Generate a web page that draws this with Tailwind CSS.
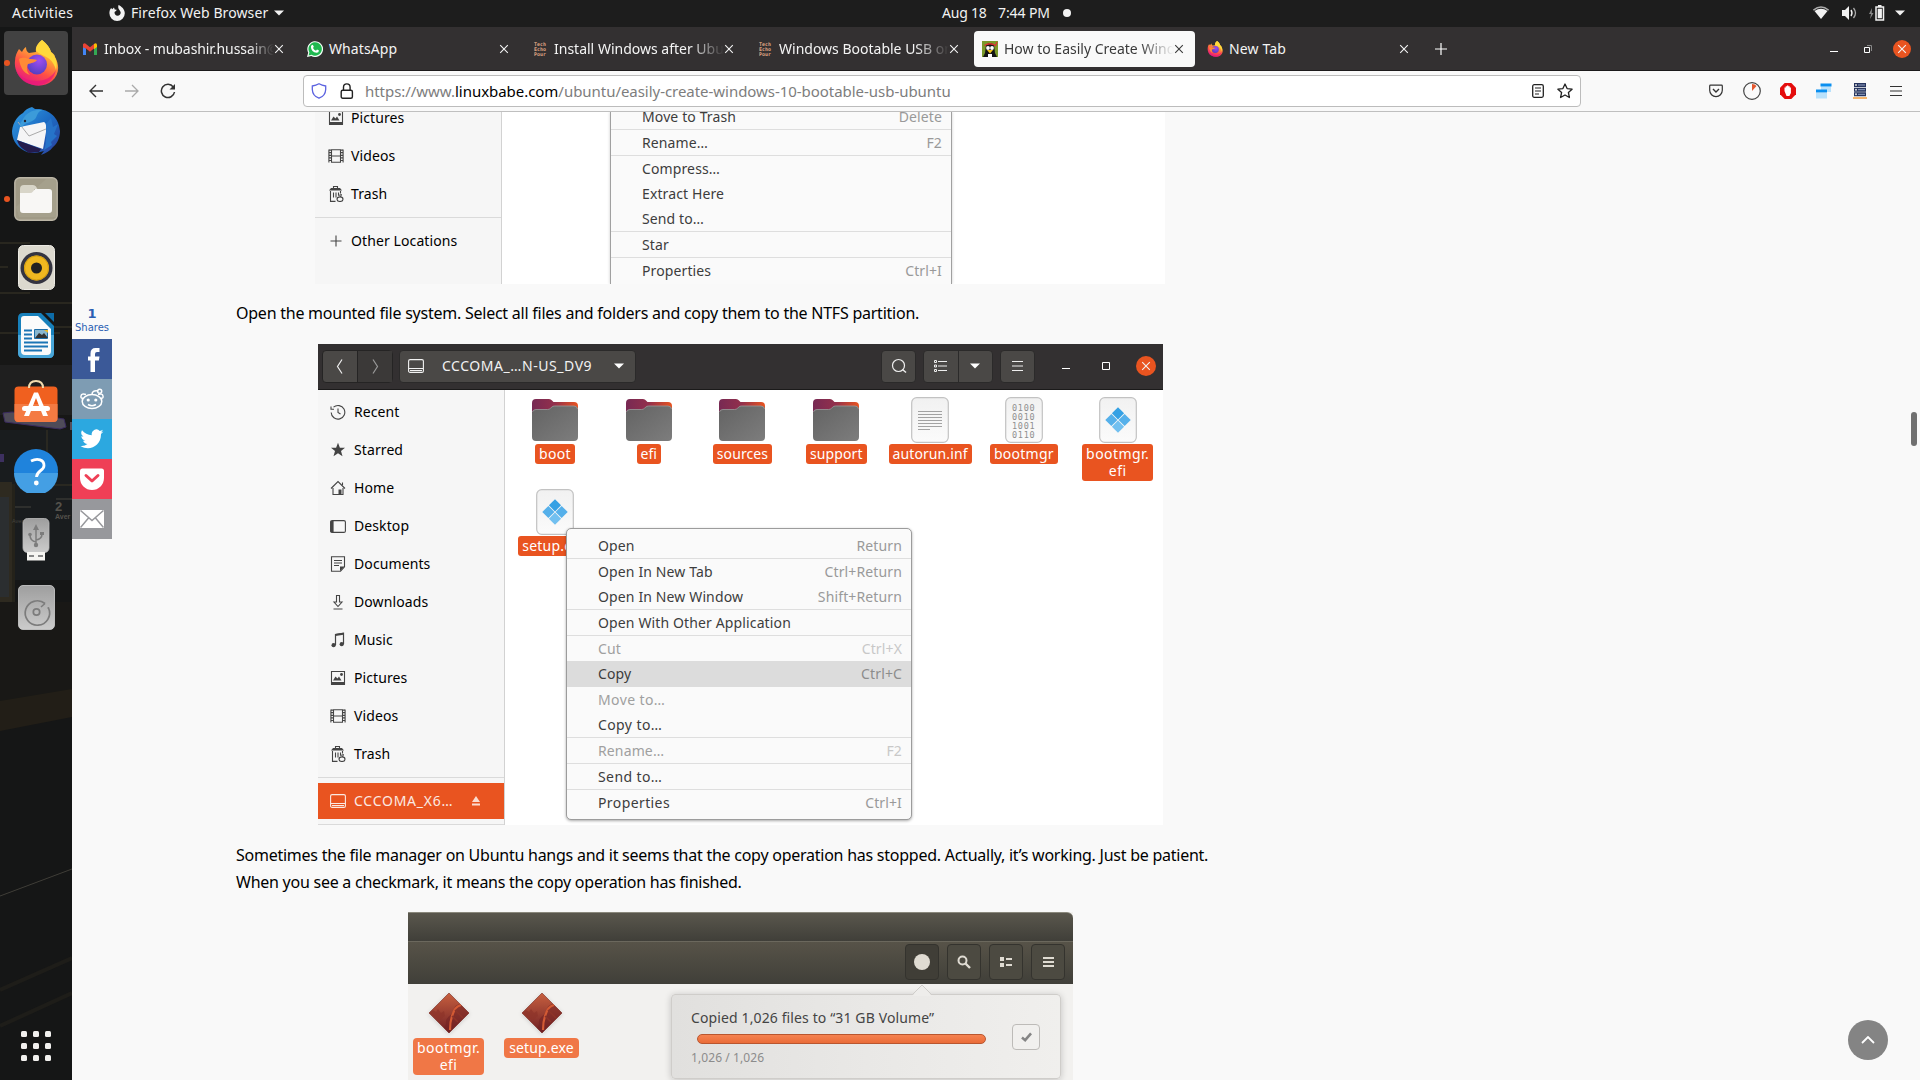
<!DOCTYPE html>
<html lang="en">
<head>
<meta charset="utf-8">
<title>How to Easily Create Windows 10 Bootable USB on Ubuntu</title>
<script src="https://cdn.jsdelivr.net/npm/@tailwindcss/browser@4"></script>
</head>
<body class="w-[1920px] h-[1080px] overflow-hidden bg-[#f9f9f9] font-['Noto_Sans','Open_Sans',sans-serif] text-[14px] leading-none text-[#3d3d3d]">

<svg class="absolute h-0 w-0">
  <defs>
    <linearGradient id="ff" x1=".8" y1="0" x2=".3" y2="1"><stop offset="0" stop-color="#fff44f"/><stop offset=".35" stop-color="#ffa436"/><stop offset=".65" stop-color="#ff4f45"/><stop offset="1" stop-color="#e31587"/></linearGradient>
    <radialGradient id="ffg" cx=".6" cy=".3" r=".8"><stop offset="0" stop-color="#a04df0"/><stop offset="1" stop-color="#4a3dbb"/></radialGradient>
    <linearGradient id="fold" x1="0" y1="0" x2="1" y2="0"><stop offset="0" stop-color="#772953"/><stop offset=".5" stop-color="#93304c"/><stop offset="1" stop-color="#e95420"/></linearGradient>
    <linearGradient id="foldf" x1="0" y1="0" x2="1" y2="1"><stop offset="0" stop-color="#636363"/><stop offset="1" stop-color="#7d7d7d"/></linearGradient>
    <linearGradient id="sheet" x1="0" y1="0" x2="0" y2="1"><stop offset="0" stop-color="#f1f1f1"/><stop offset="1" stop-color="#fbfbfb"/></linearGradient>
    <linearGradient id="dia" x1="0" y1="0" x2="0" y2="1"><stop offset="0" stop-color="#c8603f"/><stop offset="1" stop-color="#6e1f24"/></linearGradient>
    <linearGradient id="tb" x1="0" y1="0" x2="1" y2="1"><stop offset="0" stop-color="#35a0e4"/><stop offset=".5" stop-color="#1c6cc4"/><stop offset="1" stop-color="#2d3e9c"/></linearGradient>
    <linearGradient id="dev" x1="0" y1="0" x2="0" y2="1"><stop offset="0" stop-color="#9e9e9e"/><stop offset="1" stop-color="#cbcbcb"/></linearGradient>
  </defs>
  <symbol id="firefox" viewBox="0 0 46 46">
    <path d="M29 0c5 4 8 8 9 12 2 1 4 3 4 5 5 9 4 18-3 24-7 6-18 6-26 1C5 37 1 29 2 21c0-5 2-9 4-12l3 3c1-2 2-4 4-5 0 3 1 5 3 6l7-1c-1-5 2-9 6-12z" fill="url(#ff)"/>
    <path d="M29 0c5 4 8 8 9 12 5 5 7 11 5 18-2-7-5-10-8-12-4-3-12-5-12-8 0-4 3-7 6-10z" fill="#ffd93b"/>
    <circle cx="24" cy="24.500" r="10" fill="url(#ffg)"/>
    <path d="M6 19c4-2 7-1 10 0 3 0 6 0 8 1-2 3-6 3-9 4-2 4-1 8 2 11-7-2-10-9-11-16z" fill="#ff8a36"/>
    <path d="M3 30c5 8 12 11 21 11 8 0 15-4 19-11-2 9-9 15-19 15-11 0-18-6-21-15z" fill="#e9197a" opacity=".75"/>
  </symbol>
  <symbol id="recent" viewBox="0 0 16 16"><path d="M3.500 3.200A6.800 6.800 0 1 1 1.200 8.500M1 2.500v2.700h3M8 4.500v4l2.500 1.500" fill="none" stroke="currentColor" stroke-width="1.100"/></symbol>
  <symbol id="starred" viewBox="0 0 16 16"><path d="M8 .8l1.900 5H15l-4 3.300 1.500 5.200L8 11.200l-4.500 3.100L5 9.100 1 5.800h5.100z" fill="currentColor"/></symbol>
  <symbol id="home" viewBox="0 0 16 16"><path d="M1 8.500L8 1.500l7 7M3 8v6.500h10V8M12.500 5V2.500" fill="none" stroke="currentColor" stroke-width="1.100"/><path d="M8.500 9.500h3v5h-3z" fill="currentColor"/></symbol>
  <symbol id="desktop" viewBox="0 0 16 16"><rect x=".6" y="2.600" width="14.800" height="11.800" rx="1.500" fill="none" stroke="currentColor" stroke-width="1.100"/><path d="M.6 3h3v11.400h-3z" fill="currentColor"/></symbol>
  <symbol id="documents" viewBox="0 0 16 16"><path d="M1.500.8h13v10l-4 4.400h-9z" fill="none" stroke="currentColor" stroke-width="1.100"/><path d="M4 4.500h8M4 7h8M4 9.500h5" stroke="currentColor"/><path d="M10 15v-4.500h4.500z" fill="currentColor"/></symbol>
  <symbol id="downloads" viewBox="0 0 16 16"><path d="M6.500 1.500h3v6.500h2.500l-4 4.500-4-4.500h2.500zM3.500 15h9" fill="none" stroke="currentColor" stroke-width="1.100"/></symbol>
  <symbol id="music" viewBox="0 0 16 16"><path d="M5.500 13V2.500l8-1.300V12" fill="none" stroke="currentColor" stroke-width="1.200"/><path d="M5.500 2v2l8-1.300v-2z" fill="currentColor"/><circle cx="3.600" cy="13.200" r="2.100" fill="currentColor"/><circle cx="11.700" cy="12.200" r="2.100" fill="currentColor"/></symbol>
  <symbol id="pictures" viewBox="0 0 16 16"><path d="M1.500 1.500h13V14h-13z" fill="none" stroke="currentColor" stroke-width="1.100"/><path d="M1 12h14v3H1zM3 10.500l2.500-4 2 2 1.500-2 2.500 4z" fill="currentColor"/><circle cx="11.500" cy="4.500" r="1.400" fill="currentColor"/></symbol>
  <symbol id="videos" viewBox="0 0 16 16"><path d="M3.500 1.700h9v12.600h-9zM3.500 8h9M.9 1.500v13M15.100 1.500v13" fill="none" stroke="currentColor" stroke-width="1.100"/><path d="M2 1.500v13M14 1.500v13" stroke="currentColor" stroke-width="2" stroke-dasharray="1.200 1.400"/></symbol>
  <symbol id="trash" viewBox="0 0 16 16"><path d="M5.500 2.500v-2h4v2" fill="none" stroke="currentColor" stroke-width="1.100"/><path d="M1 4.500l2-2.500h9l2 2.500z" fill="currentColor"/><path d="M2.500 5v10.400h5M5.500 6.500v5M8 6.500v5M10.500 6.500v3M12.500 5v2.500" fill="none" stroke="currentColor" stroke-width="1.100"/><ellipse cx="12" cy="13.200" rx="3" ry="2.300" fill="none" stroke="currentColor" stroke-width="1.100"/><path d="M10.500 9.500l3-1-1 2.500" fill="none" stroke="currentColor"/></symbol>
  <symbol id="plus" viewBox="0 0 16 16"><path d="M8 2.500v11M2.500 8h11" stroke="currentColor" stroke-width="1.100"/></symbol>
  <symbol id="drive" viewBox="0 0 16 16"><rect x=".6" y="1.600" width="14.800" height="12.800" rx="1.500" fill="none" stroke="currentColor" stroke-width="1.100"/><path d="M1 10.500h14M2 12.500h12" stroke="currentColor"/></symbol>
  <symbol id="close" viewBox="0 0 10 10"><path d="M1.200 1.200l7.600 7.600M8.800 1.200L1.200 8.800" stroke="currentColor" stroke-width="1.100"/></symbol>
  <symbol id="folder" viewBox="0 0 46 42">
    <path d="M0 4q0-4 4-4h13q2 0 3 1.500L21.500 3H42q4 0 4 4v10H0z" fill="url(#fold)"/>
    <path d="M0 14.500q0-4 4-4h11.500q2 0 3-1.200l1-1q1.300-1.300 3-1.300H42q4 0 4 4V38q0 4-4 4H4q-4 0-4-4z" fill="url(#foldf)"/>
    <path d="M.5 13q.5-2.500 3.500-2.500h11.500q2 0 3-1.200l1-1q1.300-1.300 3-1.300H42q3 0 3.500 3" fill="none" stroke="#9a9a9a" stroke-width=".8"/>
  </symbol>
  <symbol id="sheetbg" viewBox="0 0 38 46"><rect x=".7" y=".7" width="36.600" height="44.600" rx="5" fill="url(#sheet)" stroke="#c2c2c2" stroke-width="1.200"/></symbol>
  <symbol id="winexe" viewBox="0 0 38 46"><use href="#sheetbg"/><g transform="translate(19 23) rotate(45)"><path d="M-9-9h8.600v8.600H-9z" fill="#35a1e4"/><path d="M.4-9H9v8.600H.4zM-9 .4h8.600V9H-9z" fill="#55b0ea"/><path d="M.4.4H9V9H.4z" fill="#72c0f0"/></g></symbol>
  <symbol id="diamond" viewBox="0 0 42 42"><path d="M21 1l20 20-20 20L1 21z" fill="url(#dia)" stroke="#7a2a22" stroke-width=".6"/><path d="M32 12c-6 1-6 5-7 8-2 4-8 5-7 12l-2 4 5 5 20-20z" fill="#6f1f22" opacity=".5"/><path d="M33 13c-7 2-7 7-9 11-1 3-2 6-2 14" fill="none" stroke="#d35a34" stroke-width="2.200"/><path d="M5 18l3 2 2-3 3 4 3-2 1 5-5 4-4-2-7-5z" fill="#8d3329" opacity=".7"/><path d="M24 24l6 6M27 18l8 8" stroke="#8d3329" stroke-width="1.500"/></symbol>
</svg>

<!-- GNOME top bar -->
<header class="flex h-[27px] items-center bg-[#1d1d1d] pb-px text-[#f2f2f2]">
  <span class="ml-3 w-[97px] tracking-[.3px]">Activities</span>
  <svg class="w-4 h-4" viewBox="0 0 16 16"><path d="M9.500 0c3 1.500 6.300 4 6.300 8.300A7.700 7.700 0 0 1 .4 8.300C.4 6 1 4.300 2.200 3l1 1.300L5 2.600l.7 2 2 .2C7.500 6 6.500 6.200 5.500 7c0 2.500 1.300 3.700 3 3.700 2 0 3.200-1.500 3.200-3.200C11.500 5 8.300 4.500 9.500 0z" fill="#f2f2f2"/></svg>
  <span class="ml-[6px] w-[143px] tracking-[.1px]">Firefox Web Browser</span>
  <svg class="w-[10px] h-[6px]" viewBox="0 0 10 6"><path d="M0 .5h10l-5 5z" fill="#f2f2f2"/></svg>
  <span class="ml-[658px] w-[56px] tracking-[-.2px]">Aug 18</span>
  <span class="w-[65px] tracking-[-.1px]">7:44 PM</span>
  <span class="w-2 h-2 rounded-full bg-[#f2f2f2]"></span>
  <svg class="ml-[742px] w-4 h-4" viewBox="0 0 16 16"><path d="M.4 5.200Q8 -1.200 15.600 5.200" fill="none" stroke="#aaa" stroke-width="1.500"/><path d="M1.500 6Q8 1.500 14.500 6L8 14z" fill="#f2f2f2"/></svg>
  <svg class="ml-[13px] w-4 h-4" viewBox="0 0 16 16"><path d="M0 5h3l4-4v14l-4-4H0z" fill="#f2f2f2"/><path d="M9 5q2 3 0 6" fill="none" stroke="#f2f2f2" stroke-width="1.400"/><path d="M11.500 3q4 5 0 10" fill="none" stroke="#aaa" stroke-width="1.300"/></svg>
  <svg class="ml-[11px] w-4 h-4" viewBox="0 0 16 16"><path d="M3 3L0 9h2l-1 5 3.500-6H2.700z" fill="#888"/><path d="M7 2h7.500v13H7z" fill="none" stroke="#f2f2f2" stroke-width="1.500"/><path d="M9 0h3.500v2H9zM8.700 3.700h4.200v9.600H8.700z" fill="#f2f2f2"/></svg>
  <svg class="ml-[10px] w-[10px] h-[6px]" viewBox="0 0 10 6"><path d="M0 .5h10l-5 5z" fill="#f2f2f2"/></svg>
</header>

<div class="flex h-[1053px]">
  <!-- Dock -->
  <aside class="relative w-[72px] shrink-0 overflow-hidden bg-[#151616]">
    <svg class="absolute left-0 top-0 w-[72px] h-[1053px]" viewBox="0 27 72 1053">
      <path d="M0 240h72v200H0z" fill="#171716"/>
      <path d="M0 243h30M0 267h8M0 293h30M30 303h42M18 327h54M0 333h60" stroke="#3a3729" stroke-width="1.500" opacity=".7"/>
      <path d="M0 365h72v50H0z" fill="#1f1f1f"/>
      <path d="M0 430h72v150H0z" fill="#1a1d1f" opacity=".9"/>
      <path d="M3 413l9-1 52 7 2 8-6 2-55-7z" fill="#4f4b58" stroke="#3b2b60"/><path d="M70 422h2v8h-2z" fill="#55505c"/><path d="M0 454h4v8H0z" fill="#3d3060"/>
      <path d="M0 482h12v120H0z" fill="#2e2a20"/><path d="M0 497h9v100H0z" fill="#2b2e30"/><path d="M12 484h3v118h-3z" fill="#24221a"/>
      <path d="M47 430v55h25" fill="none" stroke="#2f2c23" stroke-width="1.500"/>
      <path d="M56 499h16M15 507h16" stroke="#44423c"/>
      <text x="55" y="511" font-size="13" font-weight="bold" fill="#55524c" font-family="Liberation Sans">2</text>
      <text x="55" y="519" font-size="7" font-weight="bold" fill="#55524c" font-family="Liberation Sans">Aver</text>
      <text x="12" y="523" font-size="5.500" fill="#44423c" font-family="Liberation Sans">Aver</text>
      <path d="M0 602h72v90L0 702z" fill="#191816"/>
      <path d="M0 701l72-12v28L0 731z" fill="#221e17"/>
      <path d="M0 896l72-27" stroke="#4a4740" stroke-width=".8"/>
      <path d="M0 990l72-32M0 1026l72-33" stroke="#1e1d19" stroke-width="4"/>
    </svg>
    <nav class="relative flex flex-col items-center gap-1 pt-1">
      <div class="relative flex h-16 w-16 items-center justify-center rounded bg-[#424242]"><span class="absolute left-0 top-[29px] h-[6px] w-[6px] rounded-full bg-[#e95420]"></span><svg class="h-[46px] w-[46px]"><use href="#firefox"/></svg></div>
      <div class="flex h-16 w-16 items-center justify-center">
        <svg class="h-12 w-12" viewBox="0 0 48 48"><path d="M20 0l3 2C36 1 47 10 48 24c0 7-3 13-7 16-3 4-7 6-12 8l3-4-4 1c-8 2-12 1-17-2C4 39 0 32 0 24 1 14 7 8 11 6c2-3 5-5 9-6z" fill="url(#tb)"/><path d="M8 20l24-5c3 2 2 6 2 10l-3 17L5 33z" fill="#f5f5f6"/><path d="M6 15l11 14 17-7" fill="none" stroke="#aaa"/><path d="M5 33l24 9-2 3-10 1C11 42 7 40 5 33z" fill="#231b4c"/><path d="M10 14C14 5 22 2 31 3c-7 2-5 6-8 9-4 4-10 3-13 8-3-1-2-4 0-6z" fill="#3c9bd9"/><path d="M34 17l5-6 2 9 5-3-4 10 3 2-6 6 1 3-8 5c3-8 2-17 2-26z" fill="#2673c9"/><circle cx="13" cy="14" r="1.200" fill="#223"/></svg>
      </div>
      <div class="relative flex h-16 w-16 items-center justify-center"><span class="absolute left-0 top-[29px] h-[6px] w-[6px] rounded-full bg-[#e95420]"></span>
        <svg class="h-11 w-11" viewBox="0 0 44 44"><rect x=".8" y=".8" width="42.400" height="42.400" rx="5" fill="#a09a86" stroke="#bcb6a6" stroke-width="1.400"/><path d="M2 30L32 2h8q2 1 2 3v35H5z" fill="#aaa592" opacity=".5"/><path d="M6 12q0-4 4-4h9q2 0 3 1.500L23.500 12H20v6H6z" fill="#d8d5c8"/><path d="M6 16h10q2 0 3-1.500L21 12h14q3 0 3 3v18q0 3-3 3H9q-3 0-3-3z" fill="#f8f7f5"/></svg></div>
      <div class="flex h-16 w-16 items-center justify-center">
        <svg class="h-[45px] w-[37px]" viewBox="0 0 37 45"><rect x=".5" y=".5" width="36" height="44" rx="5" fill="#dcd9ce" stroke="#eceae3"/><circle cx="18.500" cy="23" r="16" fill="#343440"/><circle cx="18.500" cy="23" r="12.500" fill="#f0b820"/><circle cx="18.500" cy="23" r="12" fill="none" stroke="#d39e10"/><circle cx="18.500" cy="23" r="5.500" fill="#222"/></svg></div>
      <div class="flex h-16 w-16 items-center justify-center">
        <svg class="h-[45px] w-9" viewBox="0 0 36 45"><path d="M5 0h18l13 13v27q0 5-5 5H5q-5 0-5-5V5q0-5 5-5z" fill="#1780bb"/><path d="M0 22h36v18q0 5-5 5H5q-5 0-5-5z" fill="#49a6d8"/><path d="M27 0h9v9z" fill="#0d6ca8"/><path d="M6 3h14l13 13v22q0 4-4 4H7q-4 0-4-4V6q0-3 3-3z" fill="#fbfbfb"/><path d="M6 17.500h8M6 21.500h8M6 25.500h8M6 29.500h24M6 33.500h24M6 37.500h18" stroke="#1b75b5" stroke-width="1.800"/><path d="M16.500 16.500h13v9h-13z" fill="#88b6cf" stroke="#1e6ea8"/><path d="M17 25l4-5 3 2 2-2 4 5z" fill="#333"/><path d="M26 17h4v3z" fill="#e8b92c"/></svg></div>
      <div class="flex h-16 w-16 items-center justify-center pb-1">
        <svg class="h-[44px] w-11" viewBox="0 0 44 44"><rect x=".5" y="7.500" width="43" height="35.500" rx="4" fill="#f0601f"/><path d="M.5 25h43v14q0 4-4 4h-35q-4 0-4-4z" fill="#f47a42"/><path d="M15 9Q15 2 22 2t7 7" fill="none" stroke="#f3dcae" stroke-width="2"/><path d="M20 13.500h4L34 37h-5L22 19l-7 18h-5z" fill="#fff"/><rect x="8" y="27" width="28" height="5" rx="2.500" fill="#fff"/></svg></div>
      <div class="flex h-16 w-16 items-center justify-center">
        <svg class="h-11 w-11" viewBox="0 0 44 44"><circle cx="22" cy="22" r="22" fill="#1f83dc"/><path d="M0 24h44A22 22 0 0 1 0 24z" fill="#449fe4"/><path d="M17 12c7-3.500 13-1 13 4.500C30 22 23 21 22.500 28" fill="none" stroke="#fff" stroke-width="2.800"/><circle cx="22.300" cy="34" r="2.400" fill="#fff"/></svg></div>
      <div class="flex h-16 w-16 items-center justify-center">
        <svg class="h-[43px] w-7" viewBox="0 0 28 43"><rect x="1" y=".5" width="26" height="34" rx="4.500" fill="url(#dev)" stroke="#bbb" stroke-width=".8"/><path d="M5 34h18v8.500H5z" fill="#f6f5f2"/><path d="M7 38h5M16 38h5" stroke="#888" stroke-width="2"/><path d="M14 9v18M14 24q-6-1-6-7M14 22q6-1 6-6" fill="none" stroke="#7c7c7c" stroke-width="1.500"/><path d="M14 6l-3 6h6zM18 14h4v3h-4z" fill="#7c7c7c"/><circle cx="8" cy="16.500" r="1.800" fill="#7c7c7c"/><circle cx="14" cy="27" r="2.200" fill="#7c7c7c"/></svg></div>
      <div class="flex h-16 w-16 items-center justify-center">
        <svg class="h-[45px] w-[37px]" viewBox="0 0 37 45"><rect x=".5" y=".5" width="36" height="44" rx="4.500" fill="url(#dev)" stroke="#cfcfcf" stroke-width=".8"/><path d="M27 18.500A12.200 12.200 0 1 0 30.500 23l-1 .3" fill="none" stroke="#7c7c7c" stroke-width="1.700"/><path d="M27 18.500l-4 3.500" stroke="#7c7c7c" stroke-width="1.500"/><circle cx="18.500" cy="27" r="3.200" fill="none" stroke="#7c7c7c" stroke-width="1.700"/></svg></div>
      <svg class="mt-[388px] h-[30px] w-[30px]" viewBox="0 0 30 30"><g fill="#f2f1ef"><rect width="6" height="6" rx="1.500"/><rect x="12" width="6" height="6" rx="1.500"/><rect x="24" width="6" height="6" rx="1.500"/><rect y="12" width="6" height="6" rx="1.500"/><rect x="12" y="12" width="6" height="6" rx="1.500"/><rect x="24" y="12" width="6" height="6" rx="1.500"/><rect y="24" width="6" height="6" rx="1.500"/><rect x="12" y="24" width="6" height="6" rx="1.500"/><rect x="24" y="24" width="6" height="6" rx="1.500"/></g></svg>
    </nav>
  </aside>

  <!-- Firefox window -->
  <div class="flex w-[1848px] flex-col">
    <div class="flex h-11 items-start gap-1 border-b border-[#1c1a1b] bg-[#333031] pl-[2px] pt-1 text-[#f4f4f4]">
      <div class="flex h-9 w-[221px] items-center pl-2">
        <svg class="h-4 w-4" viewBox="0 0 16 16"><path d="M1 3v11h3V7.500z" fill="#4285f4"/><path d="M12 7v7h3V3z" fill="#34a853"/><path d="M1 6.500V3.200Q2.500 1.500 4 3l4 3.200L12 3v4.500l-4 3.200-4-3.200z" fill="#ea4335"/><path d="M12 3q2-1.500 3 .5V6l-3 2.200z" fill="#fbbc04"/></svg>
        <div class="ml-[6px] h-5 w-[170px] overflow-hidden whitespace-nowrap leading-5 tracking-[-.08px] mask-r-from-85% mask-r-to-100%">Inbox - mubashir.hussain@</div><svg class="h-[10px] w-[10px]"><use href="#close"/></svg>
      </div>
      <div class="flex h-9 w-[221px] items-center pl-2">
        <svg class="h-4 w-4" viewBox="0 0 16 16"><path d="M0 16l1.200-4.200A7.900 7.900 0 1 1 4.300 15z" fill="#f5fff8"/><path d="M1.600 14.400l.8-3A6.700 6.700 0 1 1 4.700 13.700z" fill="#1fb84f"/><path d="M4.600 4.200l1.200-.4 1 2-.8 1.100q1 2 3 2.800l1-1.100 2 1q-.3 2.200-2.300 2.200-5.500-.8-5.800-5.800 0-1.200.7-1.800z" fill="#fff"/></svg>
        <div class="ml-[6px] h-5 w-[170px] leading-5 tracking-[.1px]">WhatsApp</div><svg class="h-[10px] w-[10px]"><use href="#close"/></svg>
      </div>
      <div class="flex h-9 w-[221px] items-center pl-2">
        <div class="w-4 text-center font-['DejaVu_Sans_Mono',monospace] text-[5px] font-bold leading-[5px] text-[#dfa383]">Tech<br>Echo<br>Pour</div>
        <div class="ml-[6px] h-5 w-[170px] overflow-hidden whitespace-nowrap leading-5 mask-r-from-80% mask-r-to-100%">Install Windows after Ubuntu</div><svg class="h-[10px] w-[10px]"><use href="#close"/></svg>
      </div>
      <div class="flex h-9 w-[221px] items-center pl-2">
        <div class="w-4 text-center font-['DejaVu_Sans_Mono',monospace] text-[5px] font-bold leading-[5px] text-[#dfa383]">Tech<br>Echo<br>Pour</div>
        <div class="ml-[6px] h-5 w-[170px] overflow-hidden whitespace-nowrap leading-5 mask-r-from-80% mask-r-to-100%">Windows Bootable USB on</div><svg class="h-[10px] w-[10px]"><use href="#close"/></svg>
      </div>
      <div class="flex h-9 w-[221px] items-center rounded bg-[#f9f9f9] pl-2 text-[#3a3a3a]">
        <svg class="h-4 w-4" viewBox="0 0 16 16"><path d="M0 0h16v16H0z" fill="#7a9a2a"/><path d="M4 4q4-4 8 0l1 8 2 4H1l2-4z" fill="#151515"/><path d="M2.500 4.500Q8 1 13.500 4.500L15 1" fill="none" stroke="#d33" stroke-width="1.300"/><circle cx="6" cy="7" r="1.900" fill="#fff"/><circle cx="10" cy="7" r="1.900" fill="#fff"/><path d="M5 9h6L8 12.500z" fill="#f2c71c"/><path d="M6 13h4v3H6z" fill="#fff"/></svg>
        <div class="ml-[6px] h-5 w-[170px] overflow-hidden whitespace-nowrap leading-5 mask-r-from-80% mask-r-to-100%">How to Easily Create Windows</div><svg class="h-[10px] w-[10px]"><use href="#close"/></svg>
      </div>
      <div class="flex h-9 w-[221px] items-center pl-2">
        <svg class="h-4 w-4"><use href="#firefox"/></svg>
        <div class="ml-[6px] h-5 w-[170px] leading-5 tracking-[.15px]">New Tab</div><svg class="h-[10px] w-[10px]"><use href="#close"/></svg>
      </div>
      <div class="flex h-9 items-center pl-[11px]">
        <svg class="h-3 w-3" viewBox="0 0 12 12"><path d="M6 0v12M0 6h12" stroke="#fff" stroke-width="1.200"/></svg>
        <svg class="ml-[383px] mt-[5px] h-1 w-2" viewBox="0 0 8 4"><path d="M0 1.500h8" stroke="#fff"/></svg>
        <svg class="ml-[26px] h-2 w-2" viewBox="0 0 8 8"><path d="M.5 2.500h5v5h-5z" fill="none" stroke="#fff"/><path d="M3 .5h4.500V6" fill="none" stroke="#888"/></svg>
        <div class="ml-[21px] flex h-[18px] w-[18px] items-center justify-center rounded-full bg-[#e95420]"><svg class="h-[10px] w-[10px]"><use href="#close"/></svg></div>
      </div>
    </div>

    <div class="flex h-[41px] items-center border-b border-[#bfbfbf] bg-[#f9f9f9] pl-[17px] text-[#333]">
      <svg class="h-[14px] w-[14px]" viewBox="0 0 14 14"><path d="M14 7H1M7 1L1 7l6 6" fill="none" stroke="#333" stroke-width="1.400"/></svg>
      <svg class="ml-[22px] h-[14px] w-[14px]" viewBox="0 0 14 14"><path d="M0 7h13M7 1l6 6-6 6" fill="none" stroke="#aaa" stroke-width="1.300"/></svg>
      <svg class="ml-[21px] h-4 w-4" viewBox="0 0 16 16"><path d="M13.300 4A6.600 6.600 0 1 0 14.500 9" fill="none" stroke="#333" stroke-width="1.500"/><path d="M15 1v5.500H9.500z" fill="#333"/></svg>
      <div class="ml-[127px] flex h-8 w-[1278px] items-center rounded border border-[#bcbcbc] bg-white pl-[7px]">
        <svg class="h-4 w-4" viewBox="0 0 16 16"><path d="M8 .8Q11 2.500 14.700 3v3.500q-.3 6.500-6.700 8.700Q1.600 13 1.300 6.500V3Q5 2.500 8 .8z" fill="none" stroke="#5b62e0" stroke-width="1.300"/></svg>
        <svg class="ml-[13px] h-4 w-[14px]" viewBox="0 0 14 16"><rect x="1.200" y="7.200" width="11.200" height="8" rx="1.500" fill="none" stroke="#222" stroke-width="1.400"/><path d="M3.500 7V4.200a3.300 3.300 0 0 1 6.600 0V7" fill="none" stroke="#222" stroke-width="1.400"/></svg>
        <span class="ml-[11px] w-[1167px] whitespace-nowrap text-[15px] leading-5 tracking-[-.04px] text-[#7d7d7d]">https://www.<span class="text-black">linuxbabe.com</span>/ubuntu/easily-create-windows-10-bootable-usb-ubuntu</span>
        <svg class="h-[14px] w-3" viewBox="0 0 12 14"><rect x=".7" y=".7" width="10.600" height="12.600" rx="1.500" fill="none" stroke="#222" stroke-width="1.300"/><path d="M3 4h6M3 7h6M3 10h4" stroke="#222" stroke-width="1.200"/></svg>
        <svg class="ml-[13px] h-4 w-4" viewBox="0 0 16 16"><path d="M8 1l2.100 4.600 5 .6-3.700 3.300 1 5L8 12l-4.400 2.500 1-5L.9 6.200l5-.6z" fill="none" stroke="#222" stroke-width="1.300" stroke-linejoin="round"/></svg>
      </div>
      <svg class="ml-[128px] h-[14px] w-[14px]" viewBox="0 0 14 14"><path d="M1.500 1.200h11q.8 0 .8.800v4.300a6.300 6.300 0 0 1-12.600 0V2q0-.8.800-.8z" fill="none" stroke="#333" stroke-width="1.200"/><path d="M4 5l3 3 3-3" fill="none" stroke="#333" stroke-width="1.400"/></svg>
      <svg class="ml-5 h-[18px] w-[18px]" viewBox="0 0 18 18"><circle cx="9" cy="9" r="8.300" fill="#fafafa" stroke="#444" stroke-width="1.200"/><path d="M9 9V2q3 0 4.500 2z" fill="#e4572e"/></svg>
      <svg class="ml-[19px] h-4 w-4" viewBox="0 0 16 16"><path d="M4.700 0h6.600L16 4.700v6.600L11.300 16H4.700L0 11.300V4.700z" fill="#e40d0d"/><path d="M4.500 8V4.500h1.200V3.300H7V2.500h1.300v.8h1.400v1.200h1.200V10l-1.500 3H6.500z" fill="#fff"/></svg>
      <svg class="ml-5 h-4 w-4" viewBox="0 0 16 16"><path d="M5 3.500h10V9H5zM0 10h11v5.500H0z" fill="#b9e1fb"/><path d="M4.500.500H15.500v3h-11zM0 6.500h11v3H0z" fill="#0a8ff0"/></svg>
      <svg class="ml-[21px] h-4 w-[14px]" viewBox="0 0 14 16"><path d="M1 0h12v4H1zM1 4.700h12v4H1zM1 9.300h12v4H1z" fill="#26345e"/><path d="M5 2h7M5 6.700h7M5 11.300h7" stroke="#9fb0cf" stroke-width=".9"/><circle cx="3" cy="2" r="1" fill="#ddd"/><circle cx="3" cy="6.700" r="1" fill="#ddd"/><circle cx="3" cy="11.300" r="1" fill="#ddd"/><path d="M0 15h14" stroke="#f5b46a" stroke-width="2"/></svg>
      <svg class="ml-[23px] h-3 w-3" viewBox="0 0 12 12"><path d="M0 1.500h12M0 6h12M0 10.500h12" stroke="#333" stroke-width="1.200"/></svg>
    </div>

    <!-- Page -->
    <main class="relative h-[968px] overflow-hidden bg-[#f9f9f9]">
      <article class="flex flex-col pl-[164px] text-black">

        <figure class="ml-[79px] flex h-[172px] w-[850px] overflow-hidden bg-white">
          <div class="w-[187px] shrink-0 border-r border-[#d2d2d2] bg-[#f6f6f6] tracking-[.1px] text-black">
            <div class="-mt-[13px] flex h-[38px] items-center pl-[13px]"><svg class="h-4 w-4 text-[#444]"><use href="#pictures"/></svg><span class="ml-[7px]">Pictures</span></div>
            <div class="flex h-[38px] items-center pl-[13px]"><svg class="h-4 w-4 text-[#444]"><use href="#videos"/></svg><span class="ml-[7px]">Videos</span></div>
            <div class="flex h-[38px] items-center pl-[13px]"><svg class="h-4 w-4 text-[#444]"><use href="#trash"/></svg><span class="ml-[7px]">Trash</span></div>
            <div class="mt-1 mb-1 h-px bg-[#dadada]"></div>
            <div class="flex h-[38px] items-center pl-[13px]"><svg class="h-4 w-4 text-[#444]"><use href="#plus"/></svg><span class="ml-[7px]">Other Locations</span></div>
          </div>
          <div class="ml-[108px] w-[342px] border-x border-[#a0a0a0] bg-[#fafafa] tracking-[.12px] text-[#3d3d3d] shadow-[0_0_3px_#0003]">
            <div class="-mt-[8px] flex h-[25px] items-center justify-between pl-[31px] pr-[9px]"><span>Move to Trash</span><span class="text-[#999]">Delete</span></div>
            <div class="flex h-[26px] items-center justify-between border-t border-[#dedede] pl-[31px] pr-[9px]"><span>Rename…</span><span class="text-[#999]">F2</span></div>
            <div class="flex h-[26px] items-center border-t border-[#dedede] pl-[31px]">Compress…</div>
            <div class="flex h-[25px] items-center pl-[31px]">Extract Here</div>
            <div class="flex h-[25px] items-center pl-[31px]">Send to…</div>
            <div class="flex h-[26px] items-center border-t border-[#dedede] pl-[31px]">Star</div>
            <div class="flex h-[27px] items-center justify-between border-t border-[#dedede] pl-[31px] pr-[9px]"><span>Properties</span><span class="text-[#999]">Ctrl+I</span></div>
          </div>
        </figure>

        <p class="mt-4 whitespace-nowrap text-[16px] leading-[27px] tracking-[-.24px]">Open the mounted file system. Select all files and folders and copy them to the NTFS partition.</p>

        <figure class="relative ml-[82px] mt-[17px] h-[481px] w-[845px] overflow-hidden bg-white">
          <div class="flex h-[46px] items-center border-b border-[#1b1a1a] bg-[#333031] pb-px pl-[4px] text-[#f2f2f2]">
            <div class="flex h-[33px] w-[71px] rounded border border-[#252424] bg-[#4a4846]">
              <div class="flex w-[35px] items-center justify-center border-r border-[#252424]"><svg class="h-[15px] w-2" viewBox="0 0 8 15"><path d="M6 .5L1.500 7.500 6 14.500" fill="none" stroke="#eee" stroke-width="1.200"/></svg></div>
              <div class="flex w-[34px] items-center justify-center bg-[#3b3938]"><svg class="h-[15px] w-2" viewBox="0 0 8 15"><path d="M2 .5l4.500 7-4.500 7" fill="none" stroke="#999" stroke-width="1.200"/></svg></div>
            </div>
            <div class="ml-[6px] flex h-[33px] w-[237px] items-center rounded border border-[#2b2a2a] bg-[#4a4846] pl-[8px]"><svg class="h-4 w-4"><use href="#drive"/></svg><span class="ml-[18px] w-[172px] whitespace-nowrap tracking-[.55px]">CCCOMA_…N-US_DV9</span><svg class="h-[6px] w-[10px]" viewBox="0 0 10 6"><path d="M0 .5h10l-5 5z" fill="#fff"/></svg></div>
            <div class="ml-[245px] flex h-[33px] w-[35px] items-center justify-center rounded border border-[#2b2a2a] bg-[#4a4846]"><svg class="h-4 w-4" viewBox="0 0 16 16"><circle cx="7.500" cy="7.500" r="6" fill="none" stroke="#eee" stroke-width="1.200"/><path d="M11.500 11.500l3.500 3" stroke="#eee" stroke-width="1.500"/></svg></div>
            <div class="ml-[7px] flex h-[33px] w-[70px] items-center rounded border border-[#2b2a2a] bg-[#4a4846]">
              <div class="flex h-full w-[35px] items-center justify-center border-r border-[#2b2a2a]"><svg class="h-3 w-[13px]" viewBox="0 0 13 12"><path d="M.5.500h2v2h-2zM.5 5h2v2h-2zM.5 9.500h2v2h-2zM4 1.500h9M4 6h9M4 10.500h9" fill="none" stroke="#eee"/></svg></div>
              <div class="flex w-[34px] justify-center"><svg class="h-[6px] w-[10px]" viewBox="0 0 10 6"><path d="M0 .5h10l-5 5z" fill="#fff"/></svg></div>
            </div>
            <div class="ml-[7px] flex h-[33px] w-[35px] items-center justify-center rounded border border-[#2b2a2a] bg-[#4a4846]"><svg class="h-3 w-[11px]" viewBox="0 0 11 12"><path d="M0 1.500h11M0 6h11M0 10.500h11" stroke="#eee"/></svg></div>
            <svg class="ml-[27px] mt-[5px] h-1 w-2" viewBox="0 0 8 4"><path d="M0 1.500h8" stroke="#fff"/></svg>
            <svg class="ml-[32px] h-2 w-2" viewBox="0 0 8 8"><path d="M.5.500h7v7h-7z" fill="none" stroke="#fff"/></svg>
            <div class="ml-[26px] flex h-5 w-5 items-center justify-center rounded-full bg-[#e95420]"><svg class="h-[10px] w-[10px]"><use href="#close"/></svg></div>
          </div>
          <div class="flex h-[435px]">
            <div class="w-[187px] shrink-0 border-r border-[#d2d2d2] bg-[#f6f6f6] pt-[3px] tracking-[.1px] text-black">
              <div class="flex h-[38px] items-center pl-3"><svg class="h-4 w-4 text-[#444]"><use href="#recent"/></svg><span class="ml-2">Recent</span></div>
              <div class="flex h-[38px] items-center pl-3"><svg class="h-4 w-4 text-[#444]"><use href="#starred"/></svg><span class="ml-2">Starred</span></div>
              <div class="flex h-[38px] items-center pl-3"><svg class="h-4 w-4 text-[#444]"><use href="#home"/></svg><span class="ml-2">Home</span></div>
              <div class="flex h-[38px] items-center pl-3"><svg class="h-4 w-4 text-[#444]"><use href="#desktop"/></svg><span class="ml-2">Desktop</span></div>
              <div class="flex h-[38px] items-center pl-3"><svg class="h-4 w-4 text-[#444]"><use href="#documents"/></svg><span class="ml-2">Documents</span></div>
              <div class="flex h-[38px] items-center pl-3"><svg class="h-4 w-4 text-[#444]"><use href="#downloads"/></svg><span class="ml-2">Downloads</span></div>
              <div class="flex h-[38px] items-center pl-3"><svg class="h-4 w-4 text-[#444]"><use href="#music"/></svg><span class="ml-2">Music</span></div>
              <div class="flex h-[38px] items-center pl-3"><svg class="h-4 w-4 text-[#444]"><use href="#pictures"/></svg><span class="ml-2">Pictures</span></div>
              <div class="flex h-[38px] items-center pl-3"><svg class="h-4 w-4 text-[#444]"><use href="#videos"/></svg><span class="ml-2">Videos</span></div>
              <div class="flex h-[38px] items-center pl-3"><svg class="h-4 w-4 text-[#444]"><use href="#trash"/></svg><span class="ml-2">Trash</span></div>
              <div class="mb-[5px] mt-1 h-px bg-[#dadada]"></div>
              <div class="flex h-9 items-center bg-[#e95420] pl-3 text-[#fbe9e2]"><svg class="h-4 w-4"><use href="#drive"/></svg><span class="ml-2 w-[118px] tracking-[.75px]">CCCOMA_X6…</span><svg class="h-[10px] w-2" viewBox="0 0 8 10"><path d="M4 0l4 6H0zM0 7.500h8v2H0z" fill="#fbdccf"/></svg></div>
              <div class="mt-[5px] h-px bg-[#dadada]"></div>
            </div>
            <div class="grid h-fit grid-cols-[repeat(7,93.8px)] justify-items-center pl-[3px] pt-[7px] text-white leading-[17px]">
              <div class="flex h-[92px] flex-col items-center"><svg class="mb-[1px] mt-[2px] h-[42px] w-[46px]"><use href="#folder"/></svg><span class="mt-[2px] h-5 rounded-[3px] bg-[#e95420] px-1 leading-5 tracking-[.3px]">boot</span></div>
              <div class="flex h-[92px] flex-col items-center"><svg class="mb-[1px] mt-[2px] h-[42px] w-[46px]"><use href="#folder"/></svg><span class="mt-[2px] h-5 rounded-[3px] bg-[#e95420] px-1 leading-5">efi</span></div>
              <div class="flex h-[92px] flex-col items-center"><svg class="mb-[1px] mt-[2px] h-[42px] w-[46px]"><use href="#folder"/></svg><span class="mt-[2px] h-5 rounded-[3px] bg-[#e95420] px-1 leading-5 tracking-[.1px]">sources</span></div>
              <div class="flex h-[92px] flex-col items-center"><svg class="mb-[1px] mt-[2px] h-[42px] w-[46px]"><use href="#folder"/></svg><span class="mt-[2px] h-5 rounded-[3px] bg-[#e95420] px-1 leading-5 tracking-[.1px]">support</span></div>
              <div class="flex h-[92px] flex-col items-center"><svg class="h-[46px] w-[38px]" viewBox="0 0 38 46"><use href="#sheetbg"/><path d="M7 14.500h24M7 17.500h24M7 20.500h24M7 23.500h24M7 26.500h24M7 29.500h24M7 32.500h12" stroke="#999" stroke-width=".9"/></svg><span class="mt-[1px] h-5 rounded-[3px] bg-[#e95420] px-1 leading-5 tracking-[.1px]">autorun.inf</span></div>
              <div class="flex h-[92px] flex-col items-center"><svg class="h-[46px] w-[38px]" viewBox="0 0 38 46"><use href="#sheetbg"/><g font-family="DejaVu Sans Mono" font-size="8.500" fill="#8f8f8f" letter-spacing=".7"><text x="7" y="13.500">0100</text><text x="7" y="22.500">0010</text><text x="7" y="31.500">1001</text><text x="7" y="40.500">0110</text></g></svg><span class="mt-[1px] h-5 rounded-[3px] bg-[#e95420] px-1 leading-5 tracking-[.25px]">bootmgr</span></div>
              <div class="flex h-[92px] flex-col items-center"><svg class="h-[46px] w-[38px]"><use href="#winexe"/></svg><span class="mt-[1px] h-[37px] rounded-[3px] bg-[#e95420] px-1 pt-[1px] text-center tracking-[.45px]">bootmgr.<br>efi</span></div>
              <div class="flex h-[92px] flex-col items-center"><svg class="h-[46px] w-[38px]"><use href="#winexe"/></svg><span class="mt-[1px] h-5 rounded-[3px] bg-[#e95420] px-1 leading-5 tracking-[.2px]">setup.exe</span></div>
            </div>
          </div>
          <!-- Context menu -->
          <div class="absolute left-[248px] top-[184px] h-[292px] w-[346px] rounded-[5px] border border-[#9c9c9c] bg-[#fafafa] pt-[4px] tracking-[.13px] text-[#3d3d3d] shadow-[0_1px_3px_#0005]">
            <div class="flex h-[25px] items-center justify-between pl-[31px] pr-[9px]"><span>Open</span><span class="text-[#999]">Return</span></div>
            <div class="flex h-[26px] items-center justify-between border-t border-[#dedede] pl-[31px] pr-[9px]"><span>Open In New Tab</span><span class="text-[#999]">Ctrl+Return</span></div>
            <div class="flex h-[25px] items-center justify-between pl-[31px] pr-[9px]"><span>Open In New Window</span><span class="text-[#999]">Shift+Return</span></div>
            <div class="flex h-[26px] items-center border-t border-[#dedede] pl-[31px]">Open With Other Application</div>
            <div class="flex h-[26px] items-center justify-between border-t border-[#dedede] pl-[31px] pr-[9px]"><span class="text-[#a0a0a0]">Cut</span><span class="text-[#c8c8c8]">Ctrl+X</span></div>
            <div class="flex h-[26px] items-center justify-between bg-[#dcdcdc] pl-[31px] pr-[9px]"><span>Copy</span><span class="text-[#8c8c8c]">Ctrl+C</span></div>
            <div class="flex h-[25px] items-center pl-[31px] tracking-[.4px] text-[#a0a0a0]">Move to…</div>
            <div class="flex h-[25px] items-center pl-[31px] tracking-[.4px]">Copy to…</div>
            <div class="flex h-[26px] items-center justify-between border-t border-[#dedede] pl-[31px] pr-[9px]"><span class="text-[#a0a0a0]">Rename…</span><span class="text-[#c8c8c8]">F2</span></div>
            <div class="flex h-[26px] items-center border-t border-[#dedede] pl-[31px] tracking-[.4px]">Send to…</div>
            <div class="flex h-[26px] items-center justify-between border-t border-[#dedede] pl-[31px] pr-[9px]"><span class="tracking-[.4px]">Properties</span><span class="text-[#999]">Ctrl+I</span></div>
          </div>
        </figure>

        <p class="mt-[17px] whitespace-nowrap text-[16px] leading-[27px] tracking-[-.25px]">Sometimes the file manager on Ubuntu hangs and it seems that the copy operation has stopped. Actually, it’s working. Just be patient.<br>When you see a checkmark, it means the copy operation has finished.</p>

        <figure class="relative ml-[172px] mt-4 h-[168px] w-[665px] overflow-hidden bg-[#f2f1ef]">
          <div class="h-[29px] rounded-tr-[6px] border-t border-[#8a887c] bg-linear-to-b from-[#5a574d] to-[#403f39]"></div>
          <div class="flex h-[43px] items-center justify-end gap-2 border-t border-[#6b685d] bg-linear-to-b from-[#575348] to-[#403f39] pb-[2px] pr-2">
            <div class="flex h-9 w-[34px] items-center justify-center rounded border border-[#34332e] bg-[#403e37]"><span class="h-4 w-4 rounded-full bg-[#dfdbd2]"></span></div>
            <div class="flex h-9 w-[34px] items-center justify-center rounded border border-[#34332e] bg-[#4c4a41]"><svg class="h-[14px] w-[14px]" viewBox="0 0 14 14"><circle cx="5.500" cy="5.500" r="4" fill="none" stroke="#dfdbd2" stroke-width="2"/><path d="M8.500 8.500l4.500 4.500" stroke="#dfdbd2" stroke-width="2.400"/></svg></div>
            <div class="flex h-9 w-[34px] items-center justify-center rounded border border-[#34332e] bg-[#4c4a41]"><svg class="h-[10px] w-3" viewBox="0 0 12 10"><path d="M0 0h4v4H0zM0 6h4v4H0zM6 1h6v2H6zM6 7h6v2H6z" fill="#dfdbd2"/></svg></div>
            <div class="flex h-9 w-[34px] items-center justify-center rounded border border-[#34332e] bg-[#4c4a41]"><svg class="h-[10px] w-[11px]" viewBox="0 0 11 10"><path d="M0 0h11v2H0zM0 4h11v2H0zM0 8h11v2H0z" fill="#dfdbd2"/></svg></div>
          </div>
          <div class="flex items-start gap-5 pl-[5px] pt-[8px] text-white leading-[17px]">
            <div class="flex flex-col items-center"><svg class="h-[42px] w-[42px] drop-shadow-sm"><use href="#diamond"/></svg><span class="mt-1 h-[37px] rounded-[4px] bg-[#f07746] px-1 pt-[1px] text-center tracking-[.45px]">bootmgr.<br>efi</span></div>
            <div class="flex flex-col items-center"><svg class="h-[42px] w-[42px] drop-shadow-sm"><use href="#diamond"/></svg><span class="mt-1 h-5 rounded-[4px] bg-[#f07746] px-[5px] leading-5 tracking-[.15px]">setup.exe</span></div>
          </div>
          <div class="absolute left-[263px] top-[82px] h-[85px] w-[390px] rounded-[4px] border border-[#cfcdca] bg-linear-to-r from-[#e1e0de] via-[#e9e8e6] to-[#f0efed] pl-[19px] pt-[13px] text-[#444] shadow-[0_1px_7px_#0003]">
            <svg class="absolute left-[240px] top-[-11px] h-3 w-5" viewBox="0 0 20 12"><path d="M0 12L10 1l10 11z" fill="#eeedeb"/><path d="M0 11L10 1l10 10" fill="none" stroke="#cfcdca"/></svg>
            <div class="flex">
              <div class="w-[321px]">
                <div class="h-5 whitespace-nowrap leading-5 tracking-[.12px]">Copied 1,026 files to “31 GB Volume”</div>
                <div class="ml-[6px] mt-[6px] h-[10px] w-[289px] rounded-full border border-[#b9562f] bg-linear-to-b from-[#f58250] to-[#ea6c38]"></div>
                <div class="mt-1 h-5 text-[12px] leading-5 tracking-[.08px] text-[#8c8c8c]">1,026 / 1,026</div>
              </div>
              <div class="mt-4 flex h-[26px] w-7 items-center justify-center rounded-[4px] border border-[#bdbbb8] bg-[#f1f0ee]"><svg class="h-[10px] w-[11px]" viewBox="0 0 12 11"><path d="M1 6l3.500 3L11 1.500" fill="none" stroke="#858585" stroke-width="2.800"/></svg></div>
            </div>
          </div>
        </figure>
      </article>

      <!-- Floating share buttons -->
      <div class="absolute left-0 top-[195px] flex w-10 flex-col items-center font-['DejaVu_Sans',sans-serif] text-[#2b5fb3]">
        <span class="h-[14px] text-[13px] font-bold leading-[14px]">1</span>
        <span class="mb-[5px] h-[13px] text-[10px] leading-[13px]">Shares</span>
        <div class="flex h-10 w-10 items-center justify-center bg-[#3b5998]"><svg class="h-[25px] w-6" viewBox="0 0 24 25"><path d="M10.500 25V13.500H8V9.500h2.500V6.500Q10.500 1 15.500 1H19.500v4H17q-2 0-2 2v2.500h4.500l-.6 4H15V25z" fill="#fff"/></svg></div>
        <div class="flex h-10 w-10 items-center justify-center bg-[#7e9cb3]"><svg class="h-6 w-6" viewBox="0 0 24 24"><g fill="none" stroke="#fff" stroke-width="1.500"><ellipse cx="12" cy="14.500" rx="9.800" ry="7"/><path d="M3.500 11Q.5 12 1 9t5-1.500M20.500 11q3 1 2.500-2t-5-1.500M12 7.500Q12 3 18 4M8 17.500q4 2.500 8 0"/><circle cx="19.700" cy="4.300" r="2"/></g><circle cx="8.200" cy="13" r="1.600" fill="#fff"/><circle cx="15.800" cy="13" r="1.600" fill="#fff"/></svg></div>
        <div class="flex h-10 w-10 items-center justify-center bg-[#2ca8e0]"><svg class="h-6 w-6" viewBox="0 0 24 24"><path d="M23.400 4.600c-.8.400-1.700.6-2.600.8 1-.6 1.700-1.500 2-2.600-.9.500-1.900.9-3 1.100a4.700 4.700 0 0 0-8 4.300C7.900 8 4.400 6.100 2 3.300a4.700 4.700 0 0 0 1.500 6.300c-.8 0-1.500-.2-2.100-.6 0 2.300 1.600 4.200 3.800 4.700-.7.200-1.400.2-2.100.1.600 1.900 2.300 3.200 4.400 3.300A9.500 9.500 0 0 1 .5 19c8.500 5.400 20.700.6 20.500-12 .9-.6 1.700-1.500 2.400-2.400z" fill="#fff"/></svg></div>
        <div class="flex h-10 w-10 items-center justify-center bg-[#ef3f56]"><svg class="h-6 w-6" viewBox="0 0 24 24"><path d="M2.500 1.500h19Q24 1.500 24 4v7a12 12 0 0 1-24 0V4q0-2.500 2.500-2.500z" fill="#fff"/><path d="M6 8.500l6 5.500 6-5.500" fill="none" stroke="#ef3f56" stroke-width="3" stroke-linecap="round" stroke-linejoin="round"/></svg></div>
        <div class="flex h-10 w-10 items-center justify-center bg-[#97989c]"><svg class="h-[18px] w-6" viewBox="0 0 24 18"><path d="M0 0h24v18H0z" fill="#fff"/><path d="M.5.500L12 10.500 23.500.500M.5 17.500L8.500 8M23.500 17.500L15.500 8" fill="none" stroke="#97989c" stroke-width="1.500"/></svg></div>
      </div>

      <!-- Back to top and scroll thumb -->
      <div class="absolute left-[1776px] top-[908px] flex h-10 w-10 items-center justify-center rounded-full bg-[#848484]"><svg class="h-2 w-[14px]" viewBox="0 0 14 8"><path d="M1 7l6-6 6 6" fill="none" stroke="#fff" stroke-width="1.800"/></svg></div>
      <div class="absolute left-[1839px] top-[300px] h-[34px] w-[6px] rounded-full bg-[#707070]"></div>
    </main>
  </div>
</div>
</body>
</html>
